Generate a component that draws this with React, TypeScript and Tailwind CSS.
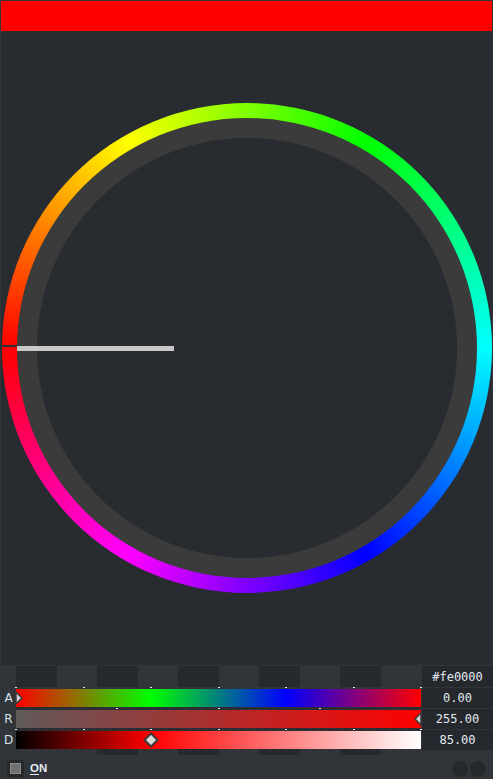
import React from "react";

const ticksSixths = [0, 1, 2, 3, 4, 5, 6];
const ticksQuarters = [1, 2, 3];

function Ticks({ fractions, top }: { fractions: number[]; top: number }) {
  return (
    <>
      {fractions.map((f, i) => (
        <span
          key={i}
          className="absolute h-px w-[2px] bg-[#e8e8e8]"
          style={{ left: Math.round(f * 405) - 1, top }}
        />
      ))}
    </>
  );
}

export default function App() {
  const topChecker = [0, 1, 2, 3, 4, 5, 6, 7, 8, 9];
  return (
    <div className="w-[493px] h-[779px] bg-[#313438] flex flex-col overflow-hidden" style={{ fontFamily: '"DejaVu Sans", sans-serif' }}>
      {/* top area with border */}
      <div className="px-px pt-px flex flex-col">
        <div className="h-[30px] bg-[#ff0000]" />
        <div className="h-[634px] bg-[#282b30] flex items-center justify-center">
          <div className="relative w-[490px] h-[490px] rounded-full bg-[conic-gradient(from_270deg,#ff0000,#ffff00,#00ff00,#00ffff,#0000ff,#ff00ff,#ff0000)] p-[15px]">
            <div className="w-full h-full rounded-full bg-[#3b3b3b] p-[20px]">
              <div className="w-full h-full rounded-full bg-[#282b30]" />
            </div>
            <span className="absolute left-0 top-[242px] w-[15px] h-[2px] bg-[#2a2d31]" />
            <span className="absolute left-[15px] top-[243px] w-[157px] h-[5px] bg-[#c8c8c8]" />
          </div>
        </div>
      </div>

      {/* bottom controls */}
      <div className="flex pt-px">
        {/* labels */}
        <div className="w-[16px] flex flex-col text-[12px] text-[#d6e2ee]">
          <div className="h-[21px]" />
          <div className="h-[2px]" />
          <div className="h-[18px] flex items-center justify-center pl-px">A</div>
          <div className="h-[3px]" />
          <div className="h-[18px] flex items-center justify-center pl-px">R</div>
          <div className="h-[3px]" />
          <div className="h-[18px] flex items-center justify-center pl-px">D</div>
        </div>

        {/* tracks */}
        <div className="relative w-[405px] flex flex-col">
          <div className="h-[21px] grid grid-cols-10">
            {topChecker.map((i) => (
              <div key={i} className={i % 2 === 0 ? "bg-[#26292d]" : ""} />
            ))}
          </div>
          <div className="h-[2px]" />
          <div className="relative h-[18px] bg-[linear-gradient(to_right,#ff0000,#00ff00_33.33%,#0000ff_66.67%,#ff0000)]">
            <svg className="absolute left-[-1px] top-[2px]" width="8" height="14" viewBox="0 0 8 14">
              <path d="M1 1 L7 7 L1 13 Z" fill="#d4d4d4" stroke="#3a3a3a" strokeWidth="1.5" strokeLinejoin="round" />
            </svg>
          </div>
          <div className="h-[3px] bg-[#2b2e32]" />
          <div className="relative h-[18px] bg-[linear-gradient(to_right,#5f5a5a,#ff0000)]">
            <svg className="absolute right-[-1px] top-[2px]" width="8" height="14" viewBox="0 0 8 14">
              <path d="M7 1 L1 7 L7 13 Z" fill="#d4d4d4" stroke="#3a3a3a" strokeWidth="1.5" strokeLinejoin="round" />
            </svg>
          </div>
          <div className="h-[3px] bg-[#2b2e32]" />
          <div className="relative h-[18px] bg-[linear-gradient(to_right,#000000,#ff0000_33.33%,#ffffff)]">
            <svg className="absolute left-[127px] top-[1px]" width="16" height="16" viewBox="0 0 16 16">
              <path d="M8 1.5 L14.5 8 L8 14.5 L1.5 8 Z" fill="#d8d8d8" stroke="#3a3a3a" strokeWidth="2" strokeLinejoin="round" />
            </svg>
          </div>
          <div className="h-[6px] grid grid-cols-10">
            {topChecker.map((i) => (
              <div key={i} className={i % 2 === 0 && i > 0 ? "bg-[#26292d]" : ""} />
            ))}
          </div>
          <Ticks fractions={ticksSixths.map((t) => t / 6)} top={21} />
          <Ticks fractions={ticksQuarters.map((t) => t / 4)} top={42} />
          <Ticks fractions={ticksSixths.map((t) => t / 6)} top={63} />
        </div>

        <div className="w-px" />

        {/* values */}
        <div className="w-[71px] flex flex-col gap-[1px] text-[12px] text-[#e2eaf2]" style={{ fontFamily: '"DejaVu Sans Mono", monospace' }}>
          <div className="h-[21px] bg-[#25282c] flex items-center justify-center">#fe0000</div>
          <div className="h-[20px] bg-[#25282c] flex items-center justify-center">0.00</div>
          <div className="h-[20px] bg-[#25282c] flex items-center justify-center">255.00</div>
          <div className="h-[20px] bg-[#25282c] flex items-center justify-center">85.00</div>
        </div>
      </div>

      {/* bottom bar */}
      <div className="flex-1 flex items-center justify-between pl-[7px] pr-[7px] pt-[3px]">
        <div className="flex items-center gap-[6px]">
          <div className="w-[17px] h-[17px] bg-[#26292c] flex items-center justify-center">
            <div className="w-[11px] h-[11px] bg-[#707070] border border-[#8a8a8a]" />
          </div>
          <span className="text-[11.5px] font-bold text-[#e2eaf2] leading-none" style={{ fontFamily: '"Liberation Sans", sans-serif' }}>
            <span className="underline underline-offset-2">O</span>N
          </span>
        </div>
        <div className="flex items-center gap-[2px]">
          <div className="w-[16px] h-[16px] rounded-full bg-[#26292c]" />
          <div className="w-[16px] h-[16px] rounded-full bg-[#26292c]" />
        </div>
      </div>
    </div>
  );
}
